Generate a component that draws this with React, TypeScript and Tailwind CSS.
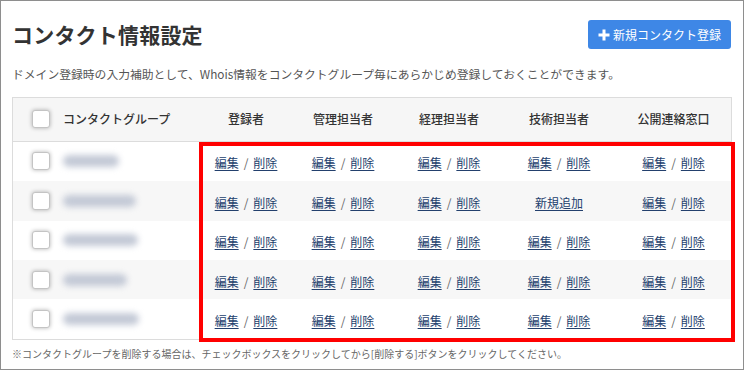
import React from 'react';

const cols = 'grid grid-cols-[43px_145px_90px_104px_108px_112px_117px]';

const roles = ['登録者', '管理担当者', '経理担当者', '技術担当者', '公開連絡窓口'];

const rows = [
  { name: 'oolab.test', w: 'w-[56px]', missing: -1 },
  { name: 'sample-0001', w: 'w-[73px]', missing: 3 },
  { name: 'contact-2002', w: 'w-[75px]', missing: -1 },
  { name: 'test-3003', w: 'w-[64px]', missing: -1 },
  { name: 'tokyo-group', w: 'w-[76px]', missing: -1 },
];

function Checkbox() {
  return (
    <div className="w-[18px] h-[18px] rounded-[3px] bg-white border border-[#c4c4c4] shadow-[0_0_4px_rgba(0,0,0,0.3)]" />
  );
}

function EditDelete() {
  return (
    <span className="text-[12px] text-[#444]">
      <a className="underline text-[#23406d] underline-offset-2">編集</a>
      <span className="mx-[5px] text-[#666]">/</span>
      <a className="underline text-[#23406d] underline-offset-2">削除</a>
    </span>
  );
}

export default function App() {
  return (
    <div
      className="relative w-[744px] h-[370px] bg-white border border-[#8e8e8e] overflow-hidden"
      style={{ fontFamily: '"Noto Sans CJK JP", "Liberation Sans", sans-serif' }}
    >
      <div className="px-[11px]">
        {/* Header */}
        <div className="flex items-center justify-between pt-[19px] pr-[1px]">
          <h1 className="text-[21px] font-bold text-[#333] leading-none tracking-[0.2px]">コンタクト情報設定</h1>
          <button className="h-[29px] pl-[10px] pr-[10px] rounded-[3px] bg-[#3e87e6] text-white text-[12px] flex items-center gap-[2px]">
            <svg width="12" height="12" viewBox="0 0 12 12" className="mr-[1px]">
              <rect x="4.5" y="0.5" width="3" height="11" fill="white" />
              <rect x="0.5" y="4.5" width="11" height="3" fill="white" />
            </svg>
            新規コンタクト登録
          </button>
        </div>

        <p className="mt-[19px] text-[11.8px] text-[#555] leading-none">
          ドメイン登録時の入力補助として、Whois情報をコンタクトグループ毎にあらかじめ登録しておくことができます。
        </p>

        {/* Table */}
        <div className="mt-[17px] w-[720px] border border-[#dcdcdc]">
          <div className={`${cols} h-[44px] items-center bg-[#f6f6f6] border-b border-[#dcdcdc] text-[12px] text-[#333] font-medium`}>
            <div className="flex justify-end pr-[6px]"><Checkbox /></div>
            <div className="pl-[7px]">コンタクトグループ</div>
            {roles.map(r => (
              <div key={r} className="text-center">{r}</div>
            ))}
          </div>
          {rows.map((row, i) => (
            <div
              key={i}
              className={`${cols} h-[39.4px] items-center ${i % 2 === 1 ? 'bg-[#f7f7f7]' : 'bg-white'}`}
            >
              <div className="flex justify-end pr-[6px]"><Checkbox /></div>
              <div className="pl-[7px]">
                <div className={`${row.w} h-[12px] rounded-full bg-[#c3c9d6] blur-[3px]`} />
              </div>
              {roles.map((r, j) => (
                <div key={r} className="text-center">
                  {j === row.missing ? (
                    <a className="text-[12px] underline text-[#23406d] underline-offset-2">新規追加</a>
                  ) : (
                    <EditDelete />
                  )}
                </div>
              ))}
            </div>
          ))}
        </div>

        <p className="mt-[9px] text-[10px] text-[#666] leading-none">
          ※コンタクトグループを削除する場合は、チェックボックスをクリックしてから[削除する]ボタンをクリックしてください。
        </p>
      </div>

      {/* annotation overlay */}
      <div className="absolute left-[198px] top-[141px] w-[536px] h-[200px] border-4 border-[#ff0000] pointer-events-none" />
    </div>
  );
}
